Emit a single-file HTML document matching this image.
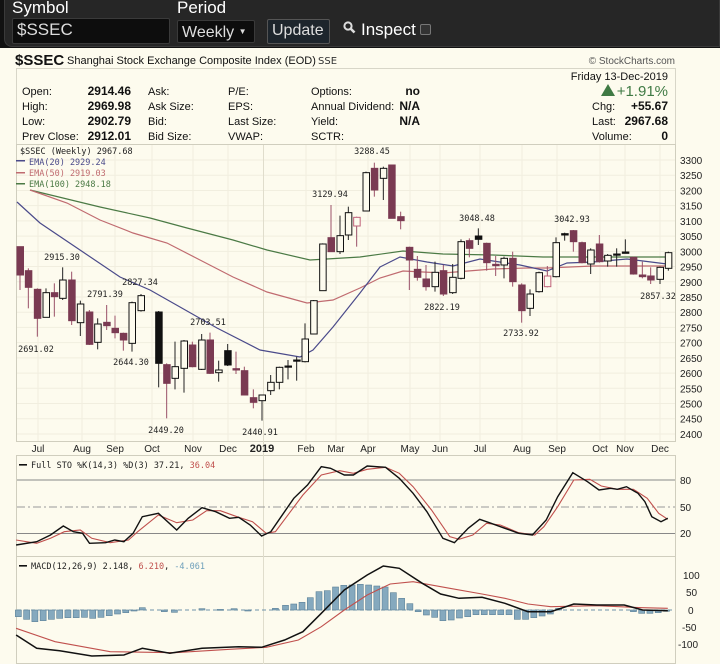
<!DOCTYPE html>
<html><head><meta charset="utf-8">
<style>
*{margin:0;padding:0;box-sizing:border-box}
body{width:720px;height:664px;overflow:hidden;background:#fdfbee;font-family:"Liberation Sans",sans-serif;position:relative}
#top{position:absolute;left:0;top:0;width:720px;height:48px;background:#111}
#topin{position:absolute;left:4px;top:0;width:716px;height:47px;background:#262626;border-radius:0 0 0 8px;border:1px solid #3a3a3a;border-top:none}
.lbl{position:absolute;color:#fff;font-size:17px;top:-2px;white-space:nowrap}
.inp{position:absolute;background:#0d0d0d;border:1px solid #3a3a3a;color:#ddd;font-size:17px;border-radius:2px;padding-left:4px;line-height:22px;white-space:nowrap;overflow:hidden}
svg{position:absolute;left:0;top:0}
</style></head><body>
<div id="top"><div id="topin"></div>
<div class="lbl" style="left:12px">Symbol</div>
<div class="lbl" style="left:177px">Period</div>
<div class="inp" style="left:12px;top:18px;width:158px;height:26px">$SSEC</div>
<div class="inp" style="left:177px;top:20px;width:78px;height:23px;line-height:21px;font-size:16px">Weekly <span style="font-size:8px;vertical-align:3px">▼</span></div>
<div class="inp" style="left:267px;top:19px;width:63px;height:25px;background:#1d252c;border-color:#555;color:#ddd;padding-left:4px;font-size:16px">Update</div>
<svg style="left:343px;top:21px" width="14" height="14"><circle cx="5" cy="5" r="3.6" fill="none" stroke="#ddd" stroke-width="2"/><line x1="7.5" y1="7.5" x2="11.5" y2="11.5" stroke="#ddd" stroke-width="2.6"/></svg>
<div class="lbl" style="left:361px;top:20px;font-size:17px">Inspect</div>
<div style="position:absolute;left:420px;top:24px;width:11px;height:11px;background:#333;border:1px solid #777;border-radius:2px"></div>
</div>
<svg id="c" width="720" height="664" style="top:0" xmlns="http://www.w3.org/2000/svg" font-family="Liberation Sans, sans-serif">
<g font-size="11" fill="#111">
<text x="15" y="65" font-size="15" font-weight="bold">$SSEC</text>
<text x="67" y="64" font-size="11">Shanghai Stock Exchange Composite Index (EOD)</text>
<text x="318" y="64" font-size="10" font-family="DejaVu Sans, sans-serif" fill="#333">SSE</text>
<text x="675" y="64" font-size="10" text-anchor="end" fill="#555">© StockCharts.com</text>
</g>
<rect x="16.5" y="68.5" width="659" height="76" fill="none" stroke="#d8d6c8"/>
<g font-size="11" fill="#111">
<text x="22" y="95">Open:</text><text x="22" y="110">High:</text><text x="22" y="125">Low:</text><text x="22" y="140">Prev Close:</text>
<g font-weight="bold" text-anchor="end" font-size="12"><text x="131" y="95">2914.46</text><text x="131" y="110">2969.98</text><text x="131" y="125">2902.79</text><text x="131" y="140">2912.01</text></g>
<text x="148" y="95">Ask:</text><text x="148" y="110">Ask Size:</text><text x="148" y="125">Bid:</text><text x="148" y="140">Bid Size:</text>
<text x="228" y="95">P/E:</text><text x="228" y="110">EPS:</text><text x="228" y="125">Last Size:</text><text x="228" y="140">VWAP:</text>
<text x="311" y="95">Options:</text><text x="311" y="110">Annual Dividend:</text><text x="311" y="125">Yield:</text><text x="311" y="140">SCTR:</text>
<g font-weight="bold" text-anchor="end" font-size="12"><text x="420" y="95">no</text><text x="420" y="110">N/A</text><text x="420" y="125">N/A</text></g>
<text x="668" y="80" text-anchor="end">Friday  13-Dec-2019</text>
<polygon points="601,96 608,84 615,96" fill="#3f7a44"/>
<text x="668" y="96" text-anchor="end" font-size="15" fill="#3f7a44">+1.91%</text>
<text x="592" y="110">Chg:</text><text x="668" y="110" text-anchor="end" font-weight="bold" font-size="12">+55.67</text>
<text x="592" y="125">Last:</text><text x="668" y="125" text-anchor="end" font-weight="bold" font-size="12">2967.68</text>
<text x="592" y="140">Volume:</text><text x="668" y="140" text-anchor="end" font-weight="bold" font-size="12">0</text>
</g>
<g stroke="#d0cebe" fill="none">
<rect x="16.5" y="144.5" width="659" height="297"/>
<rect x="16.5" y="455.5" width="659" height="101"/>
<rect x="16.5" y="556.5" width="659" height="107"/>
</g>
<g id="grid" stroke="#f1eedf" stroke-width="1"></g>
<line x1="263.5" y1="145" x2="263.5" y2="664" stroke="#e0ddcc"/>
<g id="ema" fill="none" stroke-width="1.2">
<polyline stroke="#4b7a45" points="30,190 100,207 150,218 187,228 233,240 267,250 310,260 360,257 403,251 443,254 493,255 543,257 627,257 667,257"/>
<polyline stroke="#c06b70" points="30,190 67,203 100,220 133,233 167,243 200,260 233,277 267,292 307,303 333,300 360,288 380,278 403,271 443,273 493,269 527,268 547,268 593,266 667,266"/>
<polyline stroke="#4a4a8a" points="17,202 40,223 80,250 120,277 150,290 180,307 217,328 260,350 300,357 313,350 333,327 360,293 380,267 400,257 427,262 453,266 480,259 493,261 520,265 547,271 567,263 593,262 627,259 667,264"/>
</g>
<g id="candles"></g>
<g font-family="DejaVu Sans Mono, Liberation Mono, monospace" font-size="8.5" fill="#222">
<text x="20" y="154">$SSEC (Weekly) 2967.68</text>
<rect x="16" y="160" width="9" height="1.5" fill="#4a4a8a"/><text x="29" y="165" fill="#4a4a8a">EMA(20) 2929.24</text>
<rect x="16" y="172" width="9" height="1.5" fill="#c06b70"/><text x="29" y="176" fill="#c06b70">EMA(50) 2919.03</text>
<rect x="16" y="183" width="9" height="1.5" fill="#4b7a45"/><text x="29" y="187" fill="#4b7a45">EMA(100) 2948.18</text>
<g text-anchor="middle">
<text x="62" y="260">2915.30</text><text x="36" y="352">2691.02</text><text x="105" y="297">2791.39</text><text x="140" y="285">2827.34</text>
<text x="131" y="365">2644.30</text><text x="166" y="433">2449.20</text><text x="208" y="325">2703.51</text><text x="260" y="435">2440.91</text>
<text x="330" y="197">3129.94</text><text x="372" y="154">3288.45</text><text x="477" y="221">3048.48</text><text x="442" y="310">2822.19</text>
<text x="521" y="336">2733.92</text><text x="572" y="222">3042.93</text><text x="658" y="299">2857.32</text>
</g>
</g>
<g id="yax" font-size="10" fill="#222"></g>
<g font-size="10" fill="#222" text-anchor="middle">
<text x="38" y="452">Jul</text><text x="82" y="452">Aug</text><text x="115" y="452">Sep</text><text x="152" y="452">Oct</text><text x="193" y="452">Nov</text><text x="228" y="452">Dec</text><text x="262" y="452" font-weight="bold" font-size="11">2019</text><text x="306" y="452">Feb</text><text x="336" y="452">Mar</text><text x="368" y="452">Apr</text><text x="410" y="452">May</text><text x="440" y="452">Jun</text><text x="480" y="452">Jul</text><text x="522" y="452">Aug</text><text x="557" y="452">Sep</text><text x="600" y="452">Oct</text><text x="625" y="452">Nov</text><text x="660" y="452">Dec</text>
</g>
<line x1="17" y1="480" x2="675" y2="480" stroke="#888"/>
<line x1="17" y1="507" x2="675" y2="507" stroke="#999" stroke-dasharray="8,3,2,3"/>
<line x1="17" y1="533.5" x2="675" y2="533.5" stroke="#888"/>
<g font-size="10" fill="#222"><text x="680" y="484">80</text><text x="680" y="511">50</text><text x="680" y="537">20</text></g>
<g id="sto" fill="none" stroke-width="1.3"></g>
<g font-family="DejaVu Sans Mono, Liberation Mono, monospace" font-size="8.5" fill="#222">
<rect x="19" y="464" width="8" height="1.6" fill="#111"/><text x="31" y="468">Full STO %K(14,3) %D(3) 37.21, <tspan fill="#c0504d">36.04</tspan></text>
<rect x="19" y="565" width="8" height="1.6" fill="#111"/><text x="31" y="569">MACD(12,26,9) 2.148, <tspan fill="#c0504d">6.210</tspan>, <tspan fill="#6fa0bb">-4.061</tspan></text>
</g>
<line x1="17" y1="610" x2="675" y2="610" stroke="#6f93aa" stroke-dasharray="4,3"/>
<g id="hist"></g>
<g id="macd" fill="none" stroke-width="1.4"></g>
<g font-size="10" fill="#222"><text x="683" y="579">100</text><text x="686" y="596">50</text><text x="688" y="614">0</text><text x="682" y="631">-50</text><text x="678" y="648">-100</text></g>
</svg>
<script>
var NS="http://www.w3.org/2000/svg";
function el(p,t,a){var e=document.createElementNS(NS,t);for(var k in a)e.setAttribute(k,a[k]);document.getElementById(p).appendChild(e);return e;}
for(var p=3300,i=0;p>=2400;p-=50,i++){var y=160+(3300-p)*0.3044;var t=el("yax","text",{x:680,y:y+4});t.textContent=p;el("grid","line",{x1:17,x2:675,y1:y,y2:y});}
var C2=[[60,290,375,'f',290,420],[85,362,412,'f',355,475],[112,418,505,'f',415,560],[138,428,502,'h',415,502],[163,428,440,'f',400,500],[188,390,445,'h',352,450],[215,390,512,'f',365,525],[241,462,518,'h',452,558],[268,486,583,'f',480,585],[293,522,577,'h',505,598],[320,517,527,'f',465,540],[345,535,548,'f',497,565],[370,550,570,'f',548,602],[396,458,580,'h',455,605],[423,437,482,'h',432,485],[476,486,640,'b',483,712],[500,644,700,'f',640,805],[525,650,685,'h',575,718],[552,573,655,'h',570,728],[577,585,650,'f',575,652],[605,570,658,'h',552,660],[630,570,670,'f',548,672],[656,660,668,'h',632,695],[683,602,645,'b',582,648],[708,656,660,'f',605,672],[733,662,735,'f',650,735],[760,743,757,'f',718,775],[786,735,752,'h',735,812],[812,697,722,'h',675,735],[838,652,697,'h',650,718],[864,648,650,'b',630,688],[890,630,632,'b',620,692],[915,567,635,'h',520,637],[941,452,552,'h',450,552],[968,282,422,'h',280,422],[993,263,305,'f',165,305],[1020,257,305,'h',197,312],[1045,188,255,'h',170,270],[1070,202,228,'p',200,290]];
var C3=[[18,68,183,'h',65,183],[43,55,120,'f',38,140],[70,55,85,'h',50,150],[95,45,205,'f',45,205],[122,200,212,'f',185,238],[148,292,330,'f',290,420],[172,358,382,'f',318,392],[198,387,410,'f',345,422],[225,367,410,'h',335,425],[250,362,432,'f',345,438],[278,382,428,'h',342,432],[303,275,385,'h',268,388],[328,272,295,'f',265,322],[355,258,268,'b',235,285],[380,280,338,'f',278,362],[407,343,347,'f',318,378],[432,325,345,'h',320,385],[458,325,395,'f',305,410],[485,405,482,'f',400,518],[510,432,475,'h',418,498],[537,368,425,'h',365,428],[562,378,410,'p',348,412],[588,278,380,'h',262,382],[614,251,255,'b',248,272],[640,242,275,'f',240,305],[666,278,338,'f',275,340],[692,300,342,'h',295,372],[718,282,335,'f',255,338],[743,316,333,'h',312,350],[770,312,314,'b',295,350],[796,306,310,'b',268,310],[820,322,372,'f',320,374],[847,375,380,'f',335,385],[872,378,390,'f',352,402],[900,352,388,'h',350,402],[925,308,355,'h',305,362]];
function draw(arr,ox){arr.forEach(function(c){var x=ox+c[0]/3,t=150+c[1]/3,b=150+c[2]/3,wt=150+c[4]/3,wb=150+c[5]/3;
var col=c[3]=='f'?'#7a3a52':c[3]=='p'?'#c0607a':'#111';var wc=c[3]=='f'||c[3]=='p'?'#9a5068':'#222';
el("candles","line",{x1:x,x2:x,y1:wt,y2:wb,stroke:wc,"stroke-width":1});
var h=Math.max(b-t,1.2);var fill=c[3]=='f'?'#7a3a52':c[3]=='b'?'#111':'#fdfbee';
el("candles","rect",{x:x-3,y:t,width:6.5,height:h,fill:fill,stroke:col,"stroke-width":1});});}
draw(C2,0);draw(C3,360);
function pl(g,pts,sx,col,w){var s=pts.map(function(q){return (q[0]*0.459).toFixed(1)+","+(440+q[1]/3).toFixed(1)}).join(" ");el(g,"polyline",{points:s,stroke:col,"stroke-width":w||1.3});}
var K=[[35,315],[80,305],[110,285],[138,258],[160,275],[180,280],[195,310],[230,308],[250,300],[270,305],[290,280],[310,230],[345,220],[385,270],[410,235],[440,203],[470,215],[500,235],[520,232],[545,255],[570,288],[590,275],[610,235],[640,175],[670,135],[700,80],[720,85],[750,105],[770,105],[800,78],[840,82],[870,115],[900,160],[930,215],[965,295],[990,308],[1020,265],[1045,238],[1070,250],[1100,265],[1130,280],[1160,285],[1190,240],[1215,170],[1248,98],[1280,125],[1305,150],[1330,145],[1345,148],[1365,140],[1390,160],[1405,185],[1420,230],[1440,245],[1455,235]];
var D=[[35,300],[80,310],[110,295],[140,275],[175,270],[200,295],[240,308],[280,300],[300,275],[345,225],[385,248],[420,240],[450,212],[480,212],[520,232],[550,245],[580,280],[600,275],[630,220],[660,165],[700,105],[740,92],[770,100],[800,88],[840,82],[870,100],[900,140],[940,210],[980,290],[1000,298],[1030,285],[1060,250],[1090,255],[1130,278],[1165,285],[1185,260],[1215,200],[1250,120],[1285,118],[1310,138],[1345,148],[1380,148],[1410,175],[1435,220],[1455,238]];
pl("sto",D,0,"#c0504d",1.1);pl("sto",K,0,"#111",1.4);
var M=[[35,585],[80,625],[130,632],[200,648],[270,645],[310,625],[370,640],[440,625],[520,620],[570,622],[620,600],[660,575],[700,520],[750,450],[800,405],[835,378],[870,385],[920,430],[960,462],[1000,475],[1050,472],[1100,490],[1150,515],[1200,515],[1250,492],[1300,495],[1360,495],[1400,510],[1455,512]];
var S=[[35,565],[120,605],[240,635],[380,638],[500,628],[580,622],[650,600],[700,560],[750,510],[800,465],[850,432],[900,425],[980,445],[1050,462],[1100,475],[1150,492],[1200,500],[1300,497],[1400,503],[1455,505]];
var Hb=[[40,530],[58,538],[76,545],[94,542],[112,538],[130,535],[148,533],[166,533],[184,532],[202,535],[220,532],[238,527],[256,522],[274,518],[292,512],[310,503],[358,515],[380,517],[440,506],[480,508],[510,506],[540,512],[600,505],[622,496],[640,492],[658,487],[676,473],[695,455],[713,452],[731,441],[749,436],[767,435],[785,433],[803,435],[821,438],[839,441],[857,458],[875,475],[893,491],[911,515],[929,525],[947,532],[965,542],[983,540],[1001,534],[1019,530],[1037,524],[1055,524],[1073,524],[1091,524],[1109,524],[1127,538],[1145,538],[1163,533],[1181,528],[1199,522],[1217,505],[1380,515],[1398,520],[1416,520],[1434,518],[1452,514]];
Hb.forEach(function(h){var x=h[0]*0.459,y=440+h[1]/3,z=610;var top=Math.min(y,z),ht=Math.max(Math.abs(y-z),1);
el("hist","rect",{x:x-3,y:top,width:6,height:ht,fill:"#85a9be",stroke:"#5c8198","stroke-width":0.6});});
pl("macd",S,0,"#c0504d",1.1);pl("macd",M,0,"#111",1.5);
[38,82,115,152,193,228,306,336,368,410,440,480,522,557,600,625,660].forEach(function(x){el("grid","line",{x1:x,x2:x,y1:145,y2:441});});
</script>
</body></html>
